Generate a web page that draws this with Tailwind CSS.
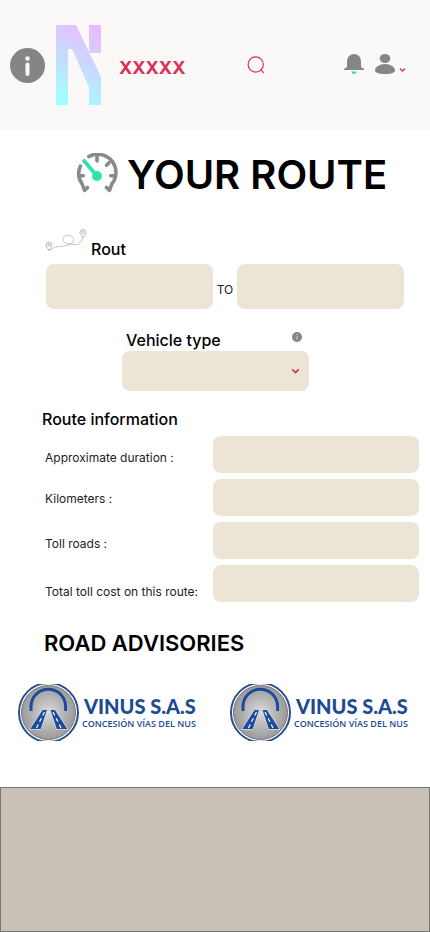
<!DOCTYPE html>
<html lang="en">
<head>
<meta charset="utf-8">
<meta name="viewport" content="width=device-width, initial-scale=1">
<title>Your route</title>
<script src="https://cdn.jsdelivr.net/npm/@tailwindcss/browser@4"></script>
</head>
<body class="flex min-h-screen flex-col bg-white font-['Inter',sans-serif] text-black">
<svg class="absolute size-0" aria-hidden="true">
  <defs>
    <linearGradient id="brand" gradientUnits="userSpaceOnUse" x1="4" y1="76" x2="42" y2="2"><stop offset="0" stop-color="#a0ffff"/><stop offset="1" stop-color="#edb8fe"/></linearGradient>
    <radialGradient id="disc"><stop offset="0" stop-color="#dadada"/><stop offset="1" stop-color="#9a9a9c"/></radialGradient>
    <symbol id="emblem" viewBox="0 0 62 57">
      <circle cx="30.500" cy="28.500" r="29.500" fill="#fff" stroke="#28508c" stroke-width="2"/>
      <circle cx="30.500" cy="28.500" r="27" fill="url(#disc)" stroke="#77777c" stroke-width="1"/>
      <path d="M13 27V22.500a17.300 17.300 0 0 1 34.600 0V27" fill="none" stroke="#1c4b9b" stroke-width="3"/>
      <path d="M24.500 25.500h5L23 45.500H11.500zM32 25.500h5l13 20H38.500z" fill="#1c4b9b" stroke="#e4e4e4" stroke-width=".8"/>
      <path d="M26.500 28l-8.500 17M35 28l8.500 17" stroke="#fff" stroke-width="1.200" stroke-dasharray="4 3"/>
    </symbol>
  </defs>
</svg>

<header class="flex h-[130px] items-center bg-[#faf9f7] pr-6 pl-[10px]">
  <button type="button" aria-label="Information" class="shrink-0">
    <svg class="block size-[35px]" viewBox="0 0 35 35"><circle cx="17.500" cy="17.500" r="17.500" fill="#858585"/><circle cx="17.500" cy="10.500" r="2.300" fill="#faf9f7"/><path d="M17.500 16.500v9.500" stroke="#faf9f7" stroke-width="4" stroke-linecap="round"/></svg>
  </button>
  <svg class="ml-[11px] h-20 w-[45px] shrink-0" viewBox="0 0 45 80" role="img" aria-label="N"><path d="M0 0H20L33 27V0H45V28H33.500L45 52V80H33V62L16 24H12V80H0Z" fill="url(#brand)"/></svg>
  <a href="#" class="ml-[18px] pt-1.5 text-lg leading-6 font-bold text-[#dc3058]">XXXXX</a>
  <button type="button" aria-label="Search" class="mr-auto ml-[62px]">
    <svg class="block size-[18px]" viewBox="0 0 18 18" fill="none" stroke="#dc3058" stroke-width="1.200"><circle cx="8.700" cy="8.500" r="7.600"/><path d="M13.800 13.800l2.700 2.700" stroke-linecap="round"/></svg>
  </button>
  <div class="flex items-center pb-0.5">
    <button type="button" aria-label="Notifications">
      <svg class="block h-5 w-[20px]" viewBox="0 0 20 20"><path d="M3 13V7a7 7 0 0 1 14 0v6l3 2v1H0v-1z" fill="#858585"/><path d="M7.500 17.500h5a2.500 2.500 0 0 1-5 0z" fill="#2fe3b0"/></svg>
    </button>
    <button type="button" aria-label="Account" class="ml-[11px] flex items-end gap-1">
      <svg class="h-5 w-[20px]" viewBox="0 0 20 20" fill="#858585"><ellipse cx="10" cy="4.500" rx="5.300" ry="4.500"/><path d="M0 16.500C0 13 4.500 10 10 10s10 3 10 6.500c0 2.200-3.500 3.500-10 3.500S0 18.700 0 16.500z"/></svg>
      <svg class="h-2 w-[7px]" viewBox="0 0 7 8" fill="none" stroke="#dc3058" stroke-width="1.300"><path d="M1 2.500l2.500 2.500L6 2.500"/></svg>
    </button>
  </div>
</header>

<main class="flex flex-1 flex-col">
  <div class="flex items-center pt-5 pl-[76px]">
    <svg class="mb-0.5 h-[42px] w-[42px] shrink-0" viewBox="0 0 42 42" fill="none" stroke-linecap="round" stroke-linejoin="round">
      <g stroke="#8a8a8a" stroke-width="3.600"><path d="M12.800 3.600A18.200 18.200 0 0 1 35.800 31L33.500 37.500L30.500 34.500M4.300 13.200A18.200 18.200 0 0 0 6.200 31L8.500 37.500L11.500 34.500"/><path d="M21 3v5M33 9.700l-2.500 2.500M38 22.700h-3.300M4 22.700h3.300"/></g>
      <path d="M8 7.700L21 23" stroke="#2fe3b0" stroke-width="3.800"/><circle cx="21" cy="23" r="4.900" fill="#2fe3b0"/>
    </svg>
    <h1 class="ml-[9px] text-[40px] leading-[50px] font-semibold whitespace-nowrap">YOUR ROUTE</h1>
  </div>

  <form class="flex flex-col">
    <div class="mt-[29px] flex h-[30px] items-start pl-[45px]">
      <svg class="h-6 w-[42px]" viewBox="0 0 42 24" fill="none" stroke="#a5a5a5" stroke-width=".8">
        <path d="M4 21.500C1.500 18 1 17 1 16a3 3 0 0 1 6 0c0 1-.500 2-3 5.500zM38 9c-2.500-3.500-3-4.500-3-5.500a3 3 0 0 1 6 0c0 1-.500 2-3 5.500z"/><circle cx="4" cy="16" r="1.200"/><circle cx="38" cy="3.500" r="1.200"/>
        <path d="M4 21.500C8 20 9 17.500 13 17.500c5 0 11-1 14-3.500 2-2 2-5 0-6.500-2-1.500-6-1.500-7.500-.500-2 2-2 4.500 0 6.500 3 1.500 8 2 12.500 2 3 0 4-4 6-6.500" stroke-dasharray="2 .6"/>
      </svg>
      <label for="origin" class="mt-2.5 ml-1 text-base leading-5 font-medium">Rout</label>
    </div>
    <div class="mt-[5px] flex items-center pr-[26px] pl-[46px]">
      <input id="origin" type="text" class="h-[45px] min-w-0 flex-1 rounded-lg bg-[#ece5d6] px-3 text-xs">
      <label for="destination" class="w-6 pt-1.5 text-center text-xs leading-4 text-[#222]">TO</label>
      <input id="destination" type="text" class="h-[45px] min-w-0 flex-1 rounded-lg bg-[#ece5d6] px-3 text-xs">
    </div>

    <div class="mt-5 mr-[121px] ml-[122px]">
      <div class="flex items-start justify-between pr-[7px] pl-1">
        <label for="vehicle" class="py-px text-base leading-5 font-medium">Vehicle type</label>
        <button type="button" aria-label="About vehicle types" class="mt-[3px]">
          <svg class="block size-[10px]" viewBox="0 0 10 10"><circle cx="5" cy="5" r="5" fill="#858585"/><path d="M5 4.200v3.500M5 2v1.200" stroke="#d0d0d0" stroke-width="1"/></svg>
        </button>
      </div>
      <div class="relative">
        <select id="vehicle" class="block h-10 w-full appearance-none rounded-lg bg-[#ece5d6] px-3 text-xs"><option value=""></option></select>
        <svg class="pointer-events-none absolute top-4 right-[9px] h-2 w-[9px]" viewBox="0 0 9 8" fill="none" stroke="#dc3058" stroke-width="1.700"><path d="M1.300 2.300L4.500 5.500L7.700 2.300"/></svg>
      </div>
    </div>
  </form>

  <section class="mt-[18px] flex flex-col">
    <h2 class="pl-[42px] text-base leading-5 font-medium">Route information</h2>
    <div class="mt-[7px] flex flex-col gap-1.5 pr-[11px] pl-[45px] text-xs leading-4 text-[#222]">
      <div class="flex items-center"><label for="duration" class="w-[168px] shrink-0 pt-1.5">Approximate duration :</label><input id="duration" readonly class="h-[37px] min-w-0 flex-1 rounded-lg bg-[#ece5d6] px-3"></div>
      <div class="flex items-center"><label for="kilometers" class="w-[168px] shrink-0 pt-0.5">Kilometers :</label><input id="kilometers" readonly class="h-[37px] min-w-0 flex-1 rounded-lg bg-[#ece5d6] px-3"></div>
      <div class="flex items-center"><label for="tolls" class="w-[168px] shrink-0 pt-1.5">Toll roads :</label><input id="tolls" readonly class="h-[37px] min-w-0 flex-1 rounded-lg bg-[#ece5d6] px-3"></div>
      <div class="flex items-center"><label for="cost" class="w-[168px] shrink-0 pt-4">Total toll cost on this route:</label><input id="cost" readonly class="h-[37px] min-w-0 flex-1 rounded-lg bg-[#ece5d6] px-3"></div>
    </div>
  </section>

  <section class="mt-[27px]">
    <h2 class="pl-11 text-[22px] leading-7 font-semibold">ROAD ADVISORIES</h2>
    <div class="mt-[27px] grid grid-cols-2 gap-x-[34px] pr-[22px] pl-[18px] text-[#1c4b92]">
      <a href="#" class="flex min-w-0 items-center gap-0.5 whitespace-nowrap">
        <svg class="h-[57px] w-[62px] shrink-0" aria-hidden="true"><use href="#emblem"/></svg>
        <span class="flex flex-col pb-0.5"><span class="pl-0.5 font-['Lato',sans-serif] text-[20px] leading-6 font-black">VINUS S.A.S</span><span class="font-['Open_Sans',sans-serif] text-[9px] leading-3 font-semibold">CONCESIÓN VÍAS DEL NUS</span></span>
      </a>
      <a href="#" class="flex min-w-0 items-center gap-0.5 whitespace-nowrap">
        <svg class="h-[57px] w-[62px] shrink-0" aria-hidden="true"><use href="#emblem"/></svg>
        <span class="flex flex-col pb-0.5"><span class="pl-0.5 font-['Lato',sans-serif] text-[20px] leading-6 font-black">VINUS S.A.S</span><span class="font-['Open_Sans',sans-serif] text-[9px] leading-3 font-semibold">CONCESIÓN VÍAS DEL NUS</span></span>
      </a>
    </div>
  </section>
  <footer class="mt-[46px] min-h-36 flex-1 border border-[#777] bg-[#cac1b6]"></footer>
</main>
</body>
</html>
